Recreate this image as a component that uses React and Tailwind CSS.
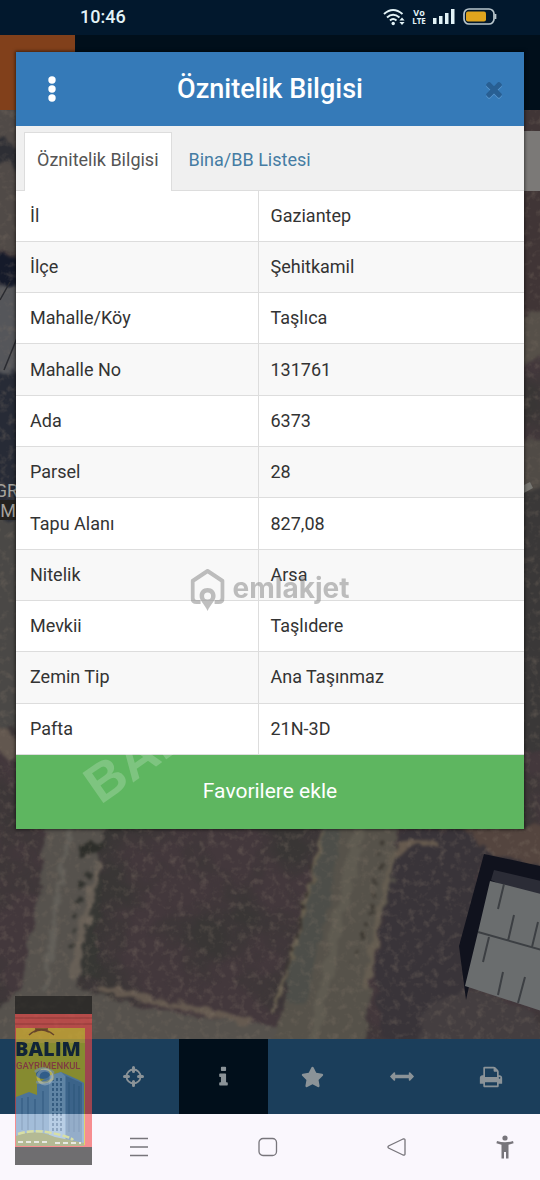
import React, { useState } from 'react';
import { FaStar } from 'react-icons/fa';

const rows = [
  ['İl', 'Gaziantep'],
  ['İlçe', 'Şehitkamil'],
  ['Mahalle/Köy', 'Taşlıca'],
  ['Mahalle No', '131761'],
  ['Ada', '6373'],
  ['Parsel', '28'],
  ['Tapu Alanı', '827,08'],
  ['Nitelik', 'Arsa'],
  ['Mevkii', 'Taşlıdere'],
  ['Zemin Tip', 'Ana Taşınmaz'],
  ['Pafta', '21N-3D'],
];

const StatusBar = () => (
  <div className="flex h-[35px] items-center justify-between bg-[#02182d] pb-0.5 pl-20 pr-[43px] text-[#e3f3f7]">
    <span className="text-lg font-medium leading-8">10:46</span>
    <div className="flex items-center gap-2">
      <svg className="h-[18px] w-[22px]" viewBox="0 0 22 18" fill="none" stroke="currentColor" strokeWidth="2">
        <path d="M1 6Q10 -2 19.500 6" />
        <path d="M4 9.500Q10 4 16.500 9.500" />
        <path d="M7 12.500Q10 9.500 13.500 12.500" />
        <circle cx="10.200" cy="15.500" r="1.700" fill="currentColor" stroke="none" />
        <path d="M19 9.500l2.600 3h-5.200zM19 17l2.600-3h-5.200z" fill="currentColor" stroke="none" />
      </svg>
      <div className="flex w-3 flex-col items-center font-['Open_Sans',sans-serif] text-[9px] font-bold leading-[8px]">
        <span>Vo</span>
        <span className="text-[8px]">LTE</span>
      </div>
      <svg className="h-[17px] w-[22px]" viewBox="0 0 22 17" fill="currentColor">
        <rect x="0" y="10" width="3.500" height="6" />
        <rect x="6" y="8" width="3.500" height="8" />
        <rect x="12" y="5" width="3.500" height="11" />
        <rect x="18" y="1" width="3.500" height="15" />
      </svg>
      <svg className="h-[17px] w-[34px]" viewBox="0 0 34 17" fill="none">
        <rect x="1" y="1" width="30" height="15" rx="5" stroke="#b9c6cc" strokeWidth="1.700" />
        <rect x="3" y="3.500" width="20" height="10" rx="2" fill="#dfa41e" />
        <path d="M32.500 6v5" stroke="#b9c6cc" strokeWidth="1.700" />
      </svg>
    </div>
  </div>
);

const MapView = () => (
  <svg className="absolute inset-0 h-full w-full" viewBox="0 0 540 929" preserveAspectRatio="xMidYMin slice" aria-hidden="true">
    <defs>
      <filter id="grain" x="0" y="0" width="100%" height="100%" colorInterpolationFilters="sRGB">
        <feTurbulence type="fractalNoise" baseFrequency="0.13" numOctaves="3" seed="8" />
        <feColorMatrix values="0 0 0 0 0.5  0 0 0 0 0.45  0 0 0 0 0.4  2.500 0 0 0 -1.250" />
      </filter>
      <filter id="soil" x="0" y="0" width="100%" height="100%" colorInterpolationFilters="sRGB">
        <feTurbulence type="fractalNoise" baseFrequency="0.015" numOctaves="4" seed="3" />
        <feColorMatrix values="0 0 0 0 0.21  0 0 0 0 0.21  0 0 0 0 0.2  0 3 0 0 -1.200" />
      </filter>
      <filter id="rough" x="-5%" y="-5%" width="110%" height="110%" colorInterpolationFilters="sRGB">
        <feTurbulence type="fractalNoise" baseFrequency="0.08" numOctaves="3" seed="4" />
        <feDisplacementMap in="SourceGraphic" scale="14" xChannelSelector="R" yChannelSelector="G" />
        <feGaussianBlur stdDeviation="1.500" />
      </filter>
    </defs>
    <rect width="540" height="929" fill="#43383c" />
    <rect width="540" height="929" filter="url(#soil)" opacity="0.7" />

    <g filter="url(#rough)">
      {/* fields and tracks */}
      <path d="M85 760L104 770L96 820L100 870L80 865Z" fill="#373734" />
      <path d="M400 720H545V760L480 750L460 930H380L375 860Z" fill="#393439" />
      <path d="M460 715H560V762L490 742Z" fill="#54453f" />
      <path d="M49 705H108L98 750L86 800L78 875L120 892L190 905L300 920V945H-10V905L20 880L38 790Z" fill="#56524d" />
      <path d="M72 705L55 800L46 880" fill="none" stroke="#625f59" strokeWidth="5" />
      <path d="M98 750L88 800L72 870" fill="none" stroke="#675f56" strokeWidth="7" />
      <path d="M100 878L170 893L250 912" fill="none" stroke="#655a50" strokeWidth="7" />
      <path d="M328 705H398L392 770L372 850L366 945H270L288 880L305 810Z" fill="#56524a" />
      <path d="M332 708L318 795L294 890" fill="none" stroke="#4d4e49" strokeWidth="22" />
      <path d="M362 708L338 810L312 940" fill="none" stroke="#5f5b51" strokeWidth="11" />
      <path d="M394 740L380 800L366 880" fill="none" stroke="#655d51" strokeWidth="6" />
      <path d="M322 720L306 790L292 850L272 900" fill="none" stroke="#686050" strokeWidth="4" />
      <path d="M395 742L410 732L440 733" fill="none" stroke="#665a4e" strokeWidth="6" />
      <path d="M78 732H106L100 745H80Z" fill="#2d2e2a" />
      <path d="M384 728L372 800L352 850" fill="none" stroke="#37332d" strokeWidth="3" strokeDasharray="5 9" />
      <path d="M90 760L76 795L71 835" fill="none" stroke="#2f302c" strokeWidth="4" strokeDasharray="6 9" />
      <path d="M312 755L299 820L287 865" fill="none" stroke="#332e2a" strokeWidth="3" strokeDasharray="6 8" />
      <path d="M410 945L430 890L480 880L530 900L560 945Z" fill="#443e40" />
      {/* left edge */}
      <path d="M-10 -10H25V140H-10Z" fill="#504a47" />
      <path d="M-10 28L25 40V65L-10 50Z" fill="#2d2e34" />
      <path d="M-10 140L25 150V175H-10Z" fill="#151a2a" />
      <path d="M-10 175H25V262H-10Z" fill="#55565a" />
      <path d="M-10 262H25V410H-10Z" fill="#272b36" />
      <path d="M-10 410H25V620H-10Z" fill="#4a4846" />
      <path d="M-10 610L25 635V655L-10 640Z" fill="#62574f" />
      {/* right edge */}
      <path d="M515 -10H555V205H515Z" fill="#403536" />
      <path d="M515 205L555 200V240L515 260Z" fill="#565049" />
      <path d="M515 330H555V380H515Z" fill="#504b46" />
      <path d="M515 380H555V640H515Z" fill="#3a3838" />
    </g>

    <rect width="540" height="929" filter="url(#grain)" opacity="0.35" />

    <path d="M0 190L10 172M4 260L17 228" stroke="#2a2b30" strokeWidth="1.500" />
    <rect x="524" y="21" width="16" height="60" fill="#7b7977" />
    <path d="M522 376L530 372L533 378L522 384Z" fill="#777671" />

    {/* warehouse roof */}
    <path d="M484 744L545 757V796L491 780L466 890L459 836Z" fill="#10121d" />
    <path d="M494 760L545 772V795L491 770Z" fill="#2b2c36" />
    <path d="M490 771L545 785V902L465 876L478 822Z" fill="#6a6d6e" />
    <path d="M478 822L545 841M504 774L498 799M514 805L508 831M538 812L532 837M489 827L483 852M503 862L498 885M525 867L518 893" fill="none" stroke="#3c3f43" strokeWidth="2" />

    <rect x="0" y="390" width="17" height="20" fill="#24221f" />
    <g fill="#a5a39d" fontFamily="Roboto, sans-serif" fontSize="18">
      <text x="18" y="387" textAnchor="end">GR</text>
      <text x="16" y="407" textAnchor="end">M</text>
    </g>
  </svg>
);

const ToolButton = ({ label, active, children }) => (
  <button
    type="button"
    aria-label={label}
    className={`flex h-[75px] flex-1 items-center justify-center text-[#8b9398] ${active ? 'bg-[#010f1b]' : ''}`}
  >
    {children}
  </button>
);

const Toolbar = () => (
  <div className="relative flex bg-[#1b3e5b] pr-1">
    <ToolButton label="Katmanlar">
      <svg className="h-5 w-5" viewBox="0 0 20 20" fill="none" stroke="currentColor" strokeWidth="3">
        <circle cx="10" cy="10" r="7" />
      </svg>
    </ToolButton>
    <ToolButton label="Konum">
      <svg className="h-[21px] w-[21px]" viewBox="0 0 21 21" fill="none" stroke="currentColor">
        <circle cx="10.500" cy="10.500" r="7" strokeWidth="1.800" />
        <path d="M10.500 1.500v4M10.500 15.500v4M1.500 10.500h4M15.500 10.500h4" strokeWidth="3" strokeLinecap="round" />
      </svg>
    </ToolButton>
    <ToolButton label="Bilgi" active>
      <svg className="h-6 w-[9px]" viewBox="0 0 640 1792" fill="currentColor">
        <path d="M640 1344v128q0 26-19 45t-45 19h-512q-26 0-45-19t-19-45v-128q0-26 19-45t45-19h64v-384h-64q-26 0-45-19t-19-45v-128q0-26 19-45t45-19h384q26 0 45 19t19 45v576h64q26 0 45 19t19 45zM512 192v192q0 26-19 45t-45 19h-256q-26 0-45-19t-19-45v-192q0-26 19-45t45-19h256q26 0 45 19t19 45z" />
      </svg>
    </ToolButton>
    <ToolButton label="Favoriler">
      <FaStar className="h-[22px] w-[23px]" />
    </ToolButton>
    <ToolButton label="Ölçüm">
      <svg className="h-[17px] w-6" viewBox="0 0 1792 1280" fill="currentColor">
        <path d="M1792 640q0 26-19 45l-256 256q-19 19-45 19t-45-19-19-45v-128h-1024v128q0 26-19 45t-45 19-45-19l-256-256q-19-19-19-45t19-45l256-256q19-19 45-19t45 19 19 45v128h1024v-128q0-26 19-45t45-19 45 19l256 256q19 19 19 45z" />
      </svg>
    </ToolButton>
    <ToolButton label="Yazdır">
      <svg className="h-6 w-6" viewBox="0 0 1792 1792" fill="currentColor">
        <path d="M448 1536h896v-256h-896v256zm0-640h896v-384h-160q-40 0-68-28t-28-68v-160h-640v640zm1152 64q0-26-19-45t-45-19-45 19-19 45 19 45 45 19 45-19 19-45zm128 0v416q0 13-9.500 22.500t-22.500 9.500h-224v160q0 40-28 68t-68 28h-960q-40 0-68-28t-28-68v-160h-224q-13 0-22.500-9.500t-9.500-22.500v-416q0-79 56.500-135.500t135.500-56.500h64v-544q0-40 28-68t68-28h672q40 0 88 20t76 48l152 152q28 28 48 76t20 88v256h64q79 0 135.500 56.500t56.500 135.500z" />
      </svg>
    </ToolButton>
  </div>
);

const SystemNav = () => (
  <div className="grid h-[66px] grid-cols-[129fr_129fr_129fr_79fr] items-center justify-items-center bg-[#faf7fd] pl-[74px] text-[#77757b]">
    <button type="button" aria-label="Son uygulamalar">
      <svg className="h-5 w-5" viewBox="0 0 20 20" stroke="currentColor" strokeWidth="1.300">
        <path d="M1 1.500h18M1 10h18M1 18.500h18" />
      </svg>
    </button>
    <button type="button" aria-label="Ana ekran">
      <svg className="h-5 w-5" viewBox="0 0 20 20" fill="none" stroke="currentColor" strokeWidth="1.300">
        <rect x="1" y="1.500" width="17.500" height="17" rx="4" />
      </svg>
    </button>
    <button type="button" aria-label="Geri">
      <svg className="h-5 w-5" viewBox="0 0 20 20" fill="none" stroke="currentColor" strokeWidth="1.300">
        <path d="M1.500 9Q0.500 10 1.500 11L16 18Q18 18.500 18 17V3Q18 1.500 16 2Z" />
      </svg>
    </button>
    <button type="button" aria-label="Erişilebilirlik" className="pl-2">
      <svg className="h-6 w-[18px]" viewBox="0 0 18 24" fill="currentColor">
        <circle cx="9" cy="3" r="2.600" />
        <path d="M1 6Q9 8.500 17 6L17.600 8.200L12.500 9.800V23.500H10V17H8V23.500H5.500V9.800L0.400 8.200Z" />
      </svg>
    </button>
  </div>
);

const AgencyBadge = () => (
  <svg className="pointer-events-none absolute bottom-[15px] left-[15px] h-[169px] w-[77px] opacity-60" viewBox="0 0 77 169">
    <rect width="77" height="169" fill="#141414" />
    <rect y="18" width="77" height="133" fill="#f44848" />
    <path d="M0 22H77M0 28H77" stroke="#c93535" strokeWidth="1.500" />
    <path d="M1 32H70V149H1Z" fill="#cdbf14" />
    <path d="M1 32H70V47H1Z" fill="#efc32a" />
    <g fill="none" stroke="#713b13" strokeWidth="1.500">
      <path d="M14 39Q26 28 39 39M19 36Q26 32 34 36M20 33H33" />
    </g>
    <text x="0" y="60" fill="#0b1320" fontFamily="Open Sans, sans-serif" fontWeight="800" fontSize="20">BALIM</text>
    <text x="1" y="73" fill="#c23a33" fontFamily="Roboto, sans-serif" fontWeight="500" fontSize="9.500">GAYRİMENKUL</text>
    <path d="M1 101L14 96L22 99V88L34 80L46 76L64 84L69 87V149H1Z" fill="#6b97c2" />
    <path d="M34 80L46 76L50 80V146H34Z" fill="#8db4d6" />
    <path d="M51 80L67 87V146H51Z" fill="#517da8" />
    <g stroke="#315b86" strokeWidth="1.500">
      <path d="M38 82V136M42 82V136M46 82V136" strokeDasharray="3 2" />
      <path d="M54 86V136M59 88V136M64 90V136M7 102V134M13 101V134M20 103V134M28 95V134" strokeOpacity="0.5" />
    </g>
    <ellipse cx="28" cy="78" rx="7" ry="5" fill="#4173a8" />
    <path d="M20 76Q27 69 38 76V83Q30 88 21 86" fill="none" stroke="#b9c3a0" strokeWidth="2.500" />
    <path d="M1 140Q20 132 40 141L69 147V150H1Z" fill="#86924f" />
    <path d="M3 138Q18 133 37 137T58 144" fill="none" stroke="#c3d06a" strokeWidth="2.500" strokeDasharray="7 2" />
    <path d="M3 146H34M40 147H66" stroke="#dfe3d2" strokeWidth="2" strokeDasharray="5 3" />
  </svg>
);

const ListingWatermark = () => (
  <div className="pointer-events-none absolute left-1/2 top-[568px] flex -translate-x-1/2 items-center gap-2 text-[#8c8c8c] opacity-55">
    <svg className="h-11 w-[34px]" viewBox="0 0 34 44" fill="none" stroke="currentColor" strokeWidth="4">
      <path d="M10 34H6Q2 34 2 30V13L17 3L32 13V30Q32 34 28 34H24" strokeLinejoin="round" />
      <path fillRule="evenodd" stroke="none" fill="currentColor" d="M17 20C12 20 9 23.500 9 28C9 33 14 36 17 43C20 36 25 33 25 28C25 23.500 22 20 17 20ZM17 24.500A3.500 3.500 0 1 1 17 31.500A3.500 3.500 0 1 1 17 24.500Z" />
    </svg>
    <span className="pb-1 font-[Inter,sans-serif] text-[28px] font-bold leading-9">emlakjet</span>
  </div>
);

const InfoDialog = () => {
  const [tab, setTab] = useState('info');

  const tabClass = (name) =>
    tab === name
      ? 'border border-b-0 border-[#dddddd] bg-white text-[#555555]'
      : 'border border-b-0 border-transparent text-[#457ca3]';

  return (
    <section role="dialog" aria-labelledby="dialog-title" className="absolute inset-x-4 top-[52px] bg-white shadow-[0_0_3px_1px_rgba(0,0,0,0.5)]">
      <header className="flex h-[74px] items-center justify-between bg-[#357ab8] px-5 text-white">
        <button type="button" aria-label="Menü" className="flex w-8 justify-center">
          <svg className="h-[26px] w-2" viewBox="0 0 8 26" fill="currentColor">
            <circle cx="4" cy="4" r="3.700" />
            <circle cx="4" cy="13" r="3.700" />
            <circle cx="4" cy="22" r="3.700" />
          </svg>
        </button>
        <h2 id="dialog-title" className="pr-3 text-[27px] font-medium leading-8">Öznitelik Bilgisi</h2>
        <button type="button" aria-label="Kapat" className="flex w-5 justify-center text-[#285f93]">
          <svg className="h-6 w-6 shrink-0 drop-shadow-[0_1px_0_#5c99cf]" viewBox="0 0 1792 1792" fill="currentColor">
            <path d="M1490 1322q0 40-28 68l-136 136q-28 28-68 28t-68-28l-294-294-294 294q-28 28-68 28t-68-28l-136-136q-28-28-28-68t28-68l294-294-294-294q-28-28-28-68t28-68l136-136q28-28 68-28t68 28l294 294 294-294q28-28 68-28t68 28l136 136q28 28 28 68t-28 68l-294 294 294 294q28 28 28 68z" />
          </svg>
        </button>
      </header>

      <div role="tablist" className="flex h-[65px] items-end border-b border-[#dddddd] bg-[#f0f0f0] px-2 text-lg">
        <button
          type="button"
          role="tab"
          aria-selected={tab === 'info'}
          onClick={() => setTab('info')}
          className={`-mb-px h-[59px] px-3 pb-1 ${tabClass('info')}`}
        >
          Öznitelik Bilgisi
        </button>
        <button
          type="button"
          role="tab"
          aria-selected={tab === 'units'}
          onClick={() => setTab('units')}
          className={`-mb-px h-[59px] px-4 pb-1 ${tabClass('units')}`}
        >
          Bina/BB Listesi
        </button>
      </div>

      <table className="h-[564px] w-full table-fixed border-collapse text-left text-lg leading-6 text-[#333333]">
        <colgroup>
          <col className="w-[242px]" />
          <col />
        </colgroup>
        <tbody>
          {rows.map(([name, value]) => (
            <tr key={name} className="border-b border-[#dddddd] even:bg-[#f8f8f8]">
              <th scope="row" className="border-r border-[#dddddd] px-3.5 font-normal">{name}</th>
              <td className="px-3">{value}</td>
            </tr>
          ))}
        </tbody>
      </table>

      <button type="button" className="block h-[74px] w-full bg-[#5eb660] text-[21px] text-white">
        Favorilere ekle
      </button>
    </section>
  );
};

const App = () => (
  <div className="relative flex min-h-screen w-full flex-col overflow-hidden bg-[#010f1b] font-[Roboto,sans-serif]">
    <StatusBar />
    <div className="h-[75px] bg-[#010f1b]">
      <div className="h-full w-[75px] bg-[#81401b]" />
    </div>
    <div className="relative flex-1">
      <MapView />
    </div>
    <Toolbar />
    <SystemNav />

    <InfoDialog />
    <ListingWatermark />
    <span className="pointer-events-none absolute left-[104px] top-[762px] origin-bottom-left -rotate-[35deg] font-['Liberation_Sans',sans-serif] text-[53px] font-bold leading-[48px] text-white opacity-20">
      BAL
    </span>
    <AgencyBadge />
  </div>
);

export default App;
